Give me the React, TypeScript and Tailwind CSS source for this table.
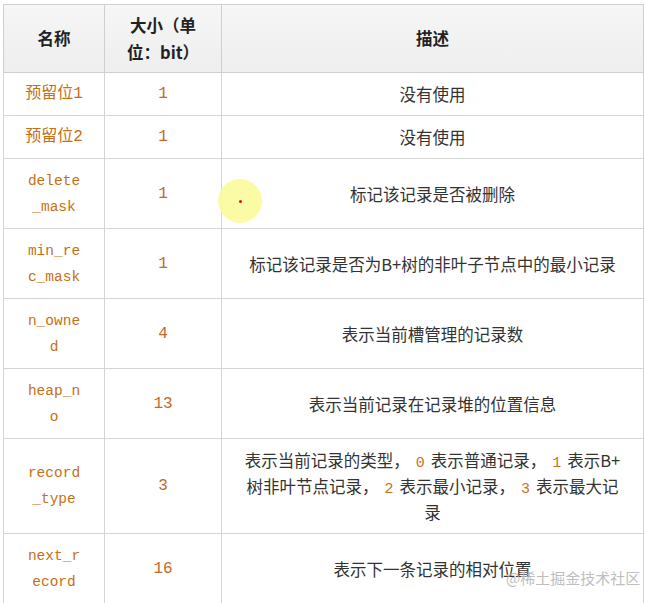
import type { ReactNode } from "react"

interface Row {
  name: string
  cjk?: boolean
  size: string
  desc: ReactNode
}

const Num = ({ children }: { children: ReactNode }) => (
  <span className="px-[6px] leading-[16px] text-[#c8741a] [font-family:'Liberation_Mono',monospace] text-[15px]">{children}</span>
)

const rows: Row[] = [
  { name: "预留位1", cjk: true, size: "1", desc: "没有使用" },
  { name: "预留位2", cjk: true, size: "1", desc: "没有使用" },
  { name: "delete_mask", size: "1", desc: "标记该记录是否被删除" },
  { name: "min_rec_mask", size: "1", desc: "标记该记录是否为B+树的非叶子节点中的最小记录" },
  { name: "n_owned", size: "4", desc: "表示当前槽管理的记录数" },
  { name: "heap_no", size: "13", desc: "表示当前记录在记录堆的位置信息" },
  {
    name: "record_type",
    size: "3",
    desc: (
      <span className="whitespace-nowrap">
        表示当前记录的类型，<Num>0</Num>表示普通记录，<Num>1</Num>表示B+
        <br />
        树非叶节点记录，<Num>2</Num>表示最小记录，<Num>3</Num>表示最大记
        <br />录
      </span>
    ),
  },
  { name: "next_record", size: "16", desc: "表示下一条记录的相对位置" },
]

export default function App() {
  return (
    <div className="relative w-[645px] h-[603px] bg-white pl-[3px] pt-[4px] [font-family:'Noto_Sans_CJK_SC',sans-serif]">
      <table className="table-fixed border-collapse w-[640px] text-[16.5px] text-[#333]">
        <colgroup>
          <col className="w-[101px]" />
          <col className="w-[117px]" />
          <col className="w-[422px]" />
        </colgroup>
        <thead>
          <tr className="bg-gradient-to-b from-[#f6f6f6] to-[#eeeeee]">
            <th className="border border-[#cfcfcf] px-[18px] py-[6.5px] leading-[27px] font-bold text-[#222] text-center">名称</th>
            <th className="border border-[#cfcfcf] px-[22px] py-[6.5px] leading-[27px] font-bold text-[#222] text-center">
              大小（单位：bit）
            </th>
            <th className="border border-[#cfcfcf] px-[22px] py-[6.5px] leading-[27px] font-bold text-[#222] text-center">描述</th>
          </tr>
        </thead>
        <tbody>
          {rows.map((r) => (
            <tr key={r.name} className={r.cjk ? "" : "h-[70px]"}>
              <td
                className={
                  r.cjk
                    ? "border border-[#d4d4d4] px-[10px] py-[8px] leading-[26px] text-center whitespace-nowrap text-[16px] text-[#c66f15] [font-family:'Liberation_Mono','Noto_Sans_CJK_SC',monospace]"
                    : "border border-[#d4d4d4] px-[20px] py-[8px] leading-[26px] text-center break-all text-[14.5px] text-[#c66f15] [font-family:'Liberation_Mono',monospace]"
                }
              >
                {r.name}
              </td>
              <td className="border border-[#d4d4d4] px-2 py-[8px] leading-[26px] text-center text-[16px] text-[#c5662a] [font-family:'Liberation_Mono',monospace]">
                {r.size}
              </td>
              <td className="border border-[#d4d4d4] px-[14px] py-[8px] leading-[26px] text-center">{r.desc}</td>
            </tr>
          ))}
        </tbody>
      </table>

      {/* cursor highlight */}
      <div className="absolute left-[218px] top-[179px] w-[44px] h-[44px] rounded-full bg-[#fbfb9c] opacity-90 flex items-center justify-center">
        <div className="w-[3px] h-[3px] rounded-full bg-[#c00000]" />
      </div>

      {/* watermark */}
      <div className="absolute left-[506px] top-[567px] text-[15px] text-[#b8b8b8] opacity-90 leading-[22px]">@稀土掘金技术社区</div>
    </div>
  )
}
